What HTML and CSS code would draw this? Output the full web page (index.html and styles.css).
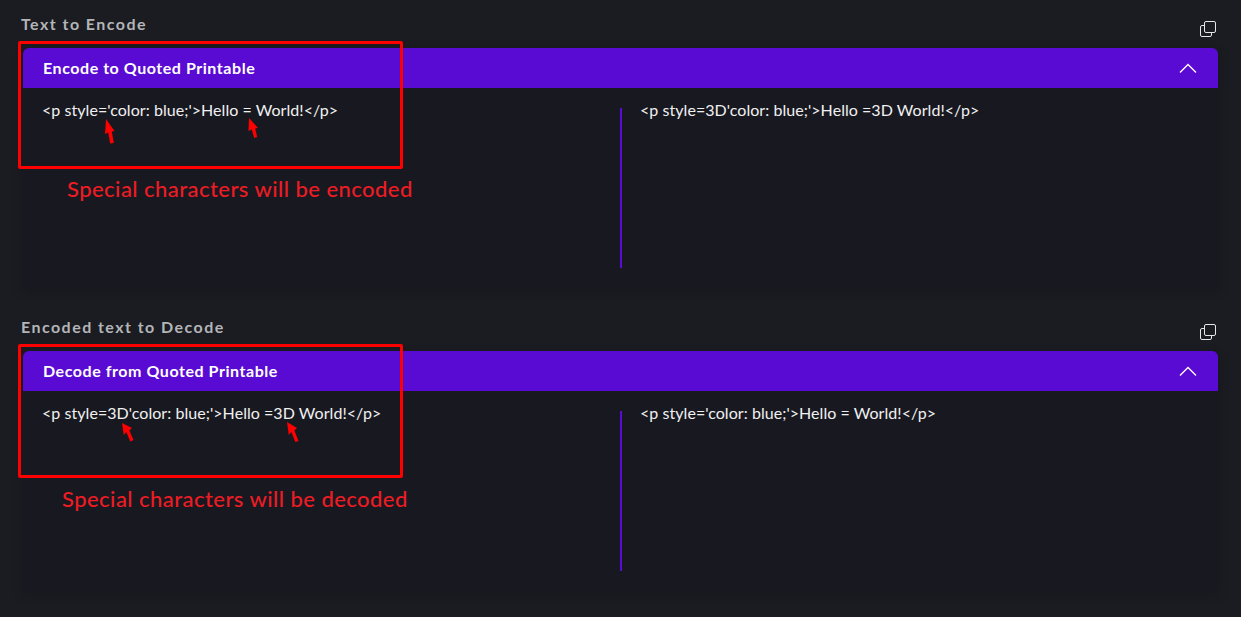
FILE: index.html
```html
<!DOCTYPE html>
<html lang="en">
<head>
    <meta charset="UTF-8">
    <meta name="viewport" content="width=device-width, initial-scale=1.0">
    <title>Quoted Printable</title>
    <link rel="stylesheet" href="styles.css">
</head>
<body>
    <!-- encode -->
    <section class="tool tool-encode">
        <div class="tool-head">
            <span class="tool-label">Text to Encode</span>
            <svg class="copy-icon" viewBox="0 0 16 16" width="16" height="16">
                <rect x="4.5" y="0.5" width="11" height="11" rx="1.5"></rect>
                <path d="M4.5 4.5H2A1.5 1.5 0 0 0 .5 6v8A1.5 1.5 0 0 0 2 15.5h8a1.5 1.5 0 0 0 1.5-1.5v-2.5"></path>
            </svg>
        </div>
        <div class="panel">
            <div class="panel-bar">
                <span class="panel-title">Encode to Quoted Printable</span>
                <svg class="chevron" viewBox="0 0 18 10" width="18" height="10"><path d="M1 9.5 9 1.5l8 8"></path></svg>
            </div>
            <div class="panel-body">
                <div class="pane pane-left"><p class="code">&lt;p style='color: blue;'&gt;Hello = World!&lt;/p&gt;</p></div>
                <div class="divider"></div>
                <div class="pane pane-right"><p class="code">&lt;p style=3D'color: blue;'&gt;Hello =3D World!&lt;/p&gt;</p></div>
            </div>
        </div>

        <div class="callout"></div>
        <svg class="arrow arrow-1" viewBox="0 0 10 25" width="10" height="25"><path d="M1 0 9.5 12 6.8 12.5 8.8 24 5.2 24.5 3.2 13.5 0 15z"></path></svg>
        <svg class="arrow arrow-2" viewBox="0 0 11 20" width="11" height="20"><path d="M1 0 10 10 7.2 10.5 9.2 19 6.2 20 3.8 11.5 .5 13z"></path></svg>
        <p class="note note-encode">Special characters will be encoded</p>
    </section>

    <!-- decode -->
    <section class="tool tool-decode">
        <div class="tool-head">
            <span class="tool-label">Encoded text to Decode</span>
            <svg class="copy-icon" viewBox="0 0 16 16" width="16" height="16">
                <rect x="4.5" y="0.5" width="11" height="11" rx="1.5"></rect>
                <path d="M4.5 4.5H2A1.5 1.5 0 0 0 .5 6v8A1.5 1.5 0 0 0 2 15.5h8a1.5 1.5 0 0 0 1.5-1.5v-2.5"></path>
            </svg>
        </div>
        <div class="panel">
            <div class="panel-bar">
                <span class="panel-title">Decode from Quoted Printable</span>
                <svg class="chevron" viewBox="0 0 18 10" width="18" height="10"><path d="M1 9.5 9 1.5l8 8"></path></svg>
            </div>
            <div class="panel-body">
                <div class="pane pane-left"><p class="code">&lt;p style=3D'color: blue;'&gt;Hello =3D World!&lt;/p&gt;</p></div>
                <div class="divider"></div>
                <div class="pane pane-right"><p class="code">&lt;p style='color: blue;'&gt;Hello = World!&lt;/p&gt;</p></div>
            </div>
        </div>

        <div class="callout"></div>
        <svg class="arrow arrow-3" viewBox="0 0 12 19" width="12" height="19"><path d="M0 0 10 5 7.4 7.4 11.5 17 8.3 18.5 4.3 9 1.8 12z"></path></svg>
        <svg class="arrow arrow-4" viewBox="0 0 12 20" width="12" height="20"><path d="M0 0 10 6 7.4 8.4 11.5 19 8.3 20 4.3 10 1.8 13z"></path></svg>
        <p class="note note-decode">Special characters will be decoded</p>
    </section>
</body>
</html>
```

FILE: styles.css
```css
:root {
    --page-bg: #1a1c21;
    --panel-bg: #181920;
    --purple: #5a0bd3;
    --red: #ed1c24;
}

* {
    box-sizing: border-box;
}

body {
    margin: 0;
    height: 617px;
    overflow: hidden;
    padding-top: 12px;
    background: var(--page-bg);
    font-family: "Lato", "Open Sans", sans-serif;
}

.tool {
    position: relative;
    height: 303px;
    padding: 0 23px;
}

.tool-head {
    display: flex;
    justify-content: space-between;
    align-items: flex-start;
    height: 36px;
}

.tool-label {
    font-size: 16px;
    line-height: 24px;
    font-weight: 700;
    letter-spacing: 1.45px;
    color: #b4b5b8;
    margin-left: -2px;
}

.copy-icon {
    margin: 9px 2px 0 0;
    fill: none;
    stroke: #e6e6e6;
    stroke-width: 1;
}

/* soft edge, the panel is barely darker than the page */
.panel {
    height: 241px;
    background: var(--panel-bg);
    border-radius: 8px 8px 0 0;
    box-shadow: 0 2px 8px rgba(20, 21, 26, 0.6);
}

.panel-bar {
    display: flex;
    justify-content: space-between;
    align-items: center;
    height: 40px;
    padding: 0 21px 0 20px;
    background: var(--purple);
    border-radius: 6px 6px 0 0;
}

.panel-title {
    font-size: 16px;
    line-height: 20px;
    margin-top: -1px;
    font-weight: 700;
    letter-spacing: 0.55px;
    color: #fff;
}

.chevron {
    fill: none;
    stroke: #fff;
    stroke-width: 1.3;
}

.panel-body {
    display: flex;
    height: 201px;
}

.pane {
    padding-top: 12px;
}

.pane-left {
    width: 597px;
    padding-left: 19px;
}

.pane-right {
    flex: 1;
    padding-left: 18px;
}

.divider {
    width: 2px;
    height: 160px;
    margin-top: 20px;
    background: var(--purple);
}

.code {
    margin: 0;
    font-size: 16px;
    line-height: 20px;
    letter-spacing: 0.05px;
    color: #f0f0f0;
}

.callout {
    position: absolute;
    left: 18px;
    top: 29px;
    width: 385px;
    border: 3px solid #fe0000;
    border-radius: 2px;
}

.tool-encode .callout {
    height: 128px;
}

.tool-decode .callout {
    height: 134px;
}

.arrow {
    position: absolute;
    fill: #fe0000;
}

.arrow-1 {
    left: 105px;
    top: 107px;
}

.arrow-2 {
    left: 248px;
    top: 106px;
}

.arrow-3 {
    left: 122px;
    top: 108px;
}

.arrow-4 {
    left: 287px;
    top: 107px;
}

.note {
    position: absolute;
    margin: 0;
    font-size: 22px;
    font-weight: 500;
    letter-spacing: 0.45px;
    line-height: 26px;
    color: var(--red);
}

.note-encode {
    left: 67px;
    top: 164px;
}

.note-decode {
    left: 62px;
    top: 171px;
}
```
